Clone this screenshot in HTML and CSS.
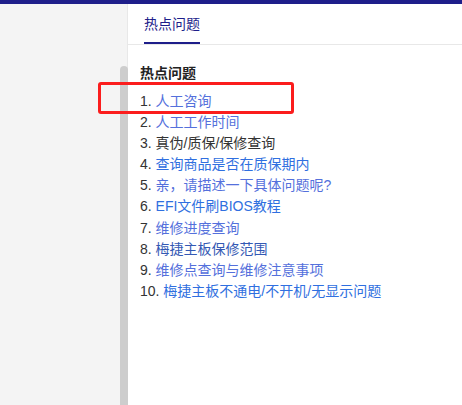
FILE: index.html
```html
<!DOCTYPE html>
<html lang="zh-CN">
<head>
    <meta charset="UTF-8">
    <meta name="viewport" content="width=device-width, initial-scale=1.0">
    <title>热点问题</title>
    <link rel="stylesheet" href="styles.css">
</head>
<body>
    <div class="topbar"></div>
    <div class="layout">
        <aside class="sidebar">
            <div class="scroll-thumb"></div>
        </aside>
        <main class="main">
            <div class="tabs">
                <a class="tab active" href="#">热点问题</a>
            </div>
            <div class="content">
                <h3>热点问题</h3>
                <ul class="faq">
                    <li><span class="num">1.</span> <a href="#" class="soft">人工咨询</a></li>
                    <li><span class="num">2.</span> <a href="#" class="soft">人工工作时间</a></li>
                    <li><span class="num">3.</span> <a href="#" class="plain">真伪/质保/保修查询</a></li>
                    <li><span class="num">4.</span> <a href="#">查询商品是否在质保期内</a></li>
                    <li><span class="num">5.</span> <a href="#" class="soft">亲，请描述一下具体问题呢?</a></li>
                    <li><span class="num">6.</span> <a href="#">EFI文件刷BIOS教程</a></li>
                    <li><span class="num">7.</span> <a href="#" class="soft">维修进度查询</a></li>
                    <li><span class="num">8.</span> <a href="#" class="dark">梅捷主板保修范围</a></li>
                    <li><span class="num">9.</span> <a href="#" class="soft">维修点查询与维修注意事项</a></li>
                    <li><span class="num">10.</span> <a href="#">梅捷主板不通电/不开机/无显示问题</a></li>
                </ul>
            </div>
        </main>
    </div>
    <div class="highlight"></div>
</body>
</html>
```

FILE: styles.css
```css
body {
    margin: 0;
    font-family: "Liberation Sans", "Noto Sans CJK SC", sans-serif;
    font-size: 14px;
    color: #333;
    background-color: #ffffff;
    height: 405px;
    overflow: hidden;
}
.topbar {
    height: 4px;
    background-color: #1e1e8a;
}
.layout {
    display: flex;
    height: 401px;
}
.sidebar {
    width: 128px;
    box-sizing: border-box;
    padding: 62px 0 0 120px;
    background-color: #f4f4f4;
    border-right: 1px solid #e8e8e8;
    display: flex;
    flex-direction: column;
}
.scroll-thumb {
    flex: 1;
    width: 8px;
    background-color: #cdcdcd;
    border-radius: 4px 4px 0 0;
}
.main {
    flex: 1;
}
.tabs {
    height: 40px;
    border-bottom: 1px solid #e8e8e8;
    padding-left: 16px;
    display: flex;
}
.tab {
    display: block;
    line-height: 40px;
    height: 38px;
    color: #1e1e8a;
    text-decoration: none;
}
.tab.active {
    border-bottom: 2px solid #1e1e8a;
}
.content {
    padding: 18px 12px 0 12px;
}
h3 {
    margin: 0 0 8px 0;
    font-size: 14px;
    line-height: 20px;
    font-weight: bold;
    color: #222;
}
.faq {
    list-style-type: none;
    padding: 0;
    margin: 0;
}
.faq li {
    line-height: 21.1px;
    white-space: nowrap;
}
.faq a {
    color: #2f6fe0;
    text-decoration: none;
}
.faq a.soft {
    color: #5470dc;
}
.faq a.dark {
    color: #3459b4;
}
.faq a.plain {
    color: #333;
}
.highlight {
    position: absolute;
    left: 98px;
    top: 82px;
    width: 190px;
    height: 26px;
    border: 3px solid #fb1d1d;
    border-radius: 3px;
}
```
